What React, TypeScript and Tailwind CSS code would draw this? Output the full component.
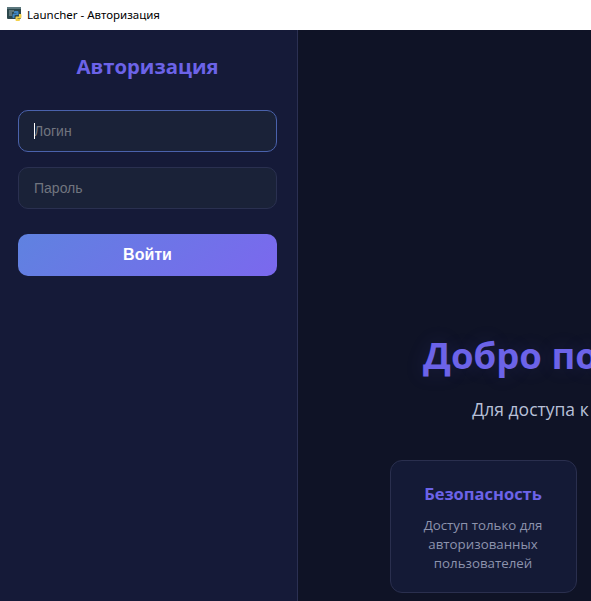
import React from 'react';

const PythonWindowIcon = () => (
  <svg width="16" height="16" viewBox="0 0 16 16">
    <rect x="0" y="0" width="14" height="12" rx="1" fill="#2c474c" />
    <rect x="0" y="0" width="14" height="2" fill="#5c787e" />
    <path d="M2 4h5M2 6h3M2 8h3" stroke="#93a8aa" strokeWidth="1" />
    <path d="M8 4h2.500a1 1 0 0 1 1 1v3H8.500a1 1 0 0 0-1 1v2H6.500a1 1 0 0 1-1-1V8a1.500 1.500 0 0 1 1.500-1.500H9.500V6H7V5a1 1 0 0 1 1-1z" fill="#3f86c4" />
    <path d="M12 7h1.500a1 1 0 0 1 1 1v2a1.500 1.500 0 0 1-1.500 1.500H10.500V12H13v1a1 1 0 0 1-1 1H9.500a1 1 0 0 1-1-1v-2.500a1 1 0 0 1 1-1H12z" fill="#f4d24c" />
  </svg>
);

const features = [
  { title: 'Безопасность', text: 'Доступ только для авторизованных пользователей' },
  { title: 'Скорость', text: 'Быстрый запуск и обновление приложений' },
  { title: 'Удобство', text: 'Простой и понятный интерфейс лаунчера' },
];

export default function App() {
  return (
    <div className="h-[601px] w-[591px] overflow-hidden flex flex-col bg-[#0f1326]">
      <div className="h-[30px] shrink-0 bg-white flex items-center pl-[7px] gap-[4px] text-[11.5px] text-black font-['Noto_Sans',sans-serif]">
        <PythonWindowIcon />
        <span>Launcher - Авторизация</span>
      </div>
      <div className="flex flex-1 min-h-0">
        <aside className="w-[298px] shrink-0 border-r border-[#2b3052] bg-[#151a38] pl-[18px] pr-[20px] pt-[20px]">
          <h2 className="text-center text-[20.3px] leading-[32px] font-bold text-[#6c63e8] font-['Open_Sans',sans-serif]">Авторизация</h2>
          <div className="mt-[28px] flex flex-col gap-[15px]">
            <div className="relative">
              <input
                placeholder="Логин"
                className="w-full h-[42px] rounded-[10px] border border-[#4a62ac] bg-[#1a2238] px-[15px] text-[14px] font-['Liberation_Sans',sans-serif] placeholder:text-[#71757f] outline-none"
              />
              <span className="absolute left-[16px] top-[13px] w-px h-[16px] bg-white" />
            </div>
            <input
              placeholder="Пароль"
              className="w-full h-[42px] rounded-[10px] border border-[#2a3050] bg-[#1a2238] px-[15px] text-[14px] font-['Liberation_Sans',sans-serif] placeholder:text-[#71757f] outline-none"
            />
          </div>
          <button className="mt-[25px] w-full h-[42px] rounded-[10px] bg-[linear-gradient(135deg,#5f82e0,#7b68ee)] text-white text-[16px] font-bold font-['Liberation_Sans',sans-serif]">
            Войти
          </button>
        </aside>
        <main className="flex-1 min-w-0 overflow-hidden bg-[#0f1326]">
          <div className="w-[622px] ml-[91px] pt-[300px] flex flex-col items-center font-['Open_Sans',sans-serif]">
            <h1 className="ml-[22px] text-[36.5px] leading-[50px] font-bold whitespace-nowrap text-[#6c63e8] [text-shadow:0_0_20px_rgba(108,99,232,0.15)]">Добро пожаловать в Launcher</h1>
            <p className="mt-[17px] mr-[4px] text-[17.5px] leading-[24px] whitespace-nowrap text-[#b8c0d8]">Для доступа к лаунчеру необходимо авторизоваться</p>
            <div className="mt-[39px] flex gap-[30px]">
              {features.map((f) => (
                <div key={f.title} className="w-[187px] h-[133px] shrink-0 rounded-[12px] border border-[#2a2f4e] bg-[#141a36] px-[18px] pt-[21px] text-center">
                  <h3 className="text-[16.5px] leading-[24px] font-bold text-[#6c63e8]">{f.title}</h3>
                  <p className="mt-[10px] text-[13.3px] leading-[19px] text-[#8d93ad]">{f.text}</p>
                </div>
              ))}
            </div>
          </div>
        </main>
      </div>
    </div>
  );
}
